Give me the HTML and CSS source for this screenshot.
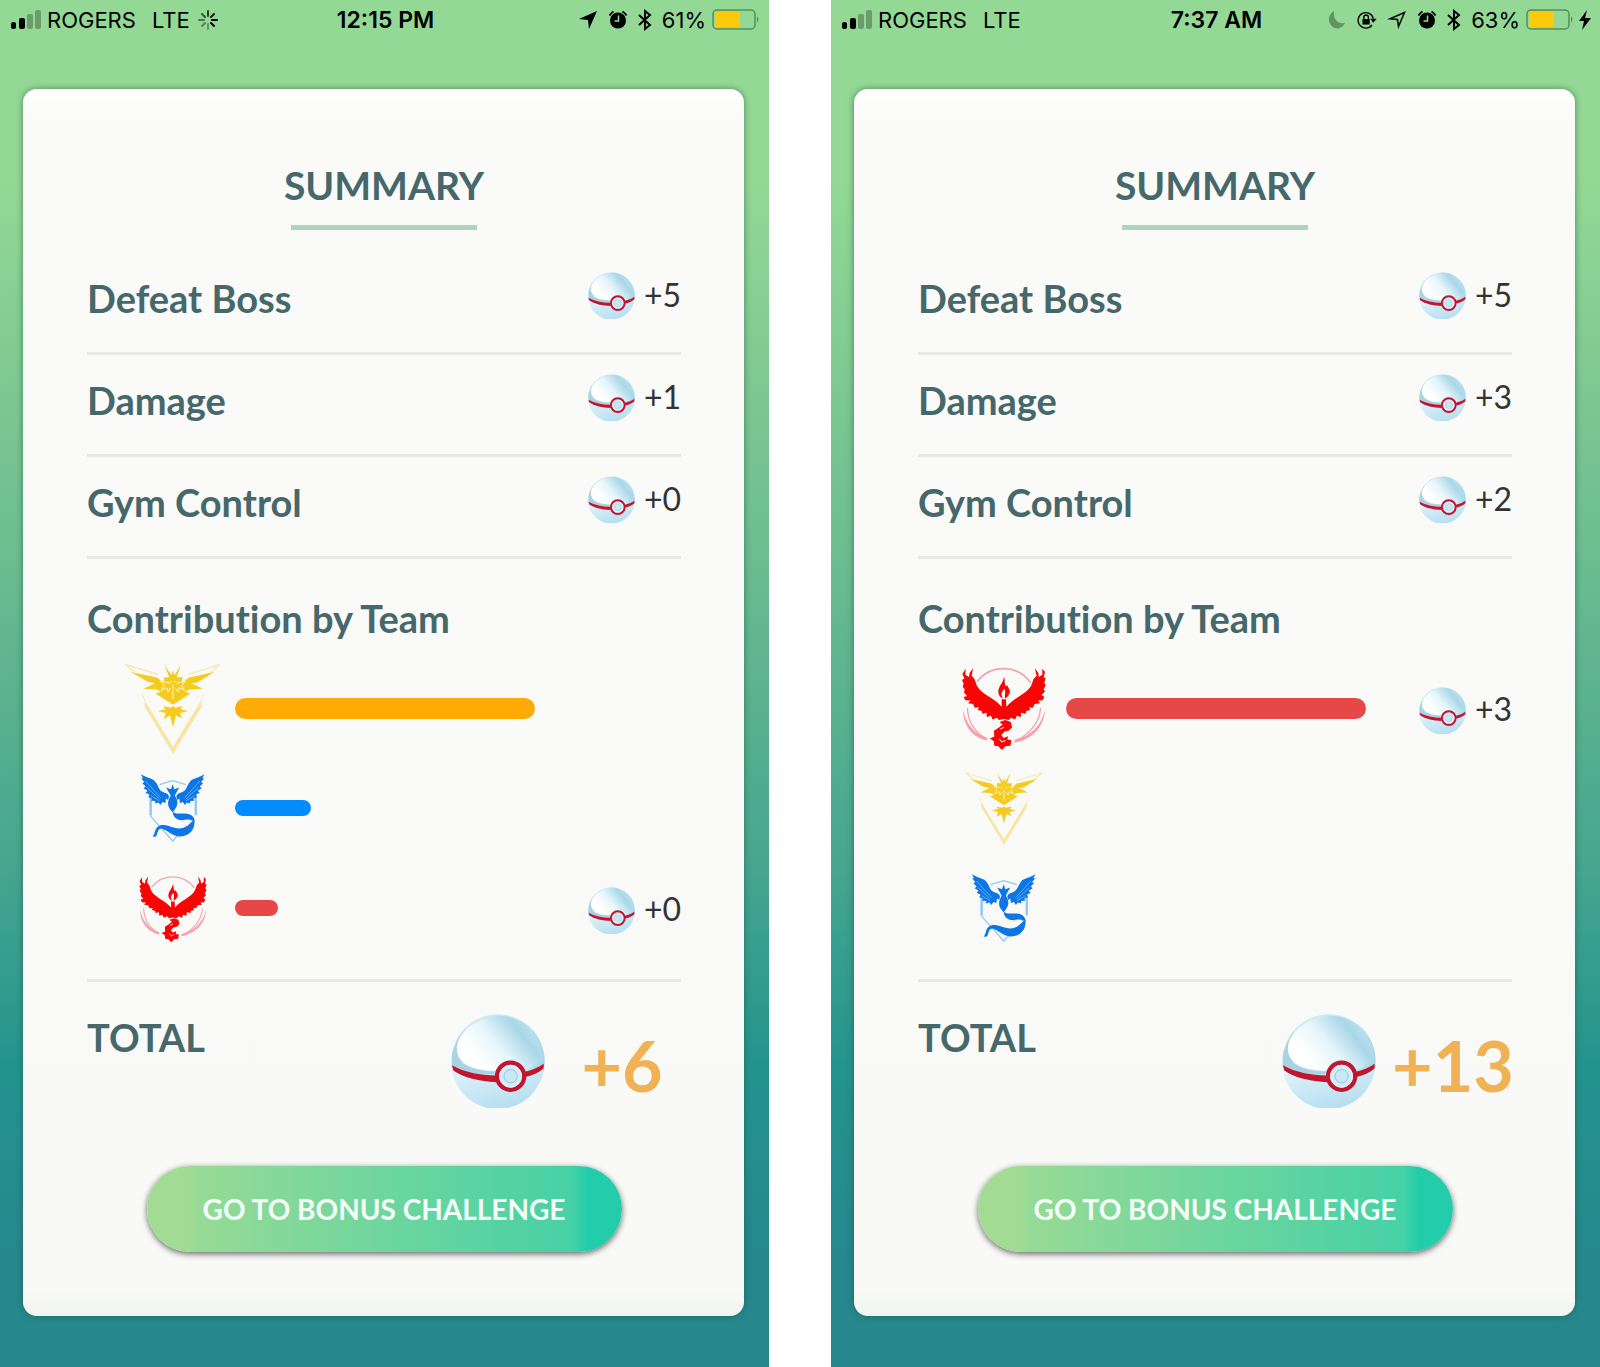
FILE: index.html
```html
<!DOCTYPE html>
<html lang="en">
<head>
<meta charset="utf-8">
<meta name="viewport" content="width=device-width, initial-scale=1">
<title>Raid Summary</title>
<link rel="stylesheet" href="styles.css">
</head>
<body>
<svg class="sprite" aria-hidden="true">
  <defs>
    <radialGradient id="ball-base" cx="0.4" cy="0.35" r="0.7">
      <stop offset="0" stop-color="#e8f7fc"/><stop offset="0.6" stop-color="#c3e6f3"/><stop offset="1" stop-color="#9acfe3"/>
    </radialGradient>
    <linearGradient id="ball-dome" x1="0.2" y1="0.7" x2="0.95" y2="0.3">
      <stop offset="0" stop-color="#ffffff"/><stop offset="0.4" stop-color="#e6f5fa"/><stop offset="0.8" stop-color="#a9d7e8"/><stop offset="1" stop-color="#b9e0ed"/>
    </linearGradient>
    <linearGradient id="ball-low" x1="0" y1="0" x2="0.6" y2="1">
      <stop offset="0" stop-color="#e4f5fb"/><stop offset="1" stop-color="#b5def0"/>
    </linearGradient>
  </defs>
  <symbol id="ball" viewBox="63 43 284 284">
    <circle cx="205" cy="185" r="141" fill="url(#ball-base)"/>
    <path d="M64 204C105 232 150 240 200 240L285 228C310 222 332 210 345 198A141 141 0 0 1 64 204Z" fill="url(#ball-low)"/>
    <path d="M66 170C70 150 80 120 100 96L96 190C120 208 160 216 196 216L194 226C145 226 95 218 66 199Z" fill="#a9d3e2"/>
    <path d="M82 160C72 110 130 55 205 48C285 48 335 110 330 180C318 198 303 208 287 212A46 46 0 0 0 200 214C145 214 92 202 82 160Z" fill="url(#ball-dome)"/>
    <path d="M66 198C105 220 150 228 200 229V249C150 247 100 236 70 214ZM283 218C308 212 329 204 343 193V207C330 219 308 230 285 234Z" fill="#c4152f"/>
    <circle cx="243" cy="231" r="41" fill="#d5ecf6" stroke="#c4152f" stroke-width="13"/>
    <circle cx="243" cy="231" r="33" fill="none" stroke="#e6f6fc" stroke-width="3"/>
    <circle cx="243" cy="231" r="20" fill="#c9e8f5" stroke="#91c8df" stroke-width="3"/>
  </symbol>

  <symbol id="instinct" viewBox="42 20 298 278">
    <g fill="none" stroke="#f8e8ae" stroke-width="4">
      <path d="M145 57L46 27L76 50M238 57L334 27L306 50"/>
      <path d="M97 116L112 150M285 116L270 150" stroke-width="3"/>
    </g>
    <path d="M104 142L112 148L191 276L269 148L277 142V157L191 297L106 157Z" fill="#f8e5a2"/>
    <path d="M64 50L142 67L164 82L164 66L180 66L165 29L187 60L191 45L195 60L215 29L202 66L220 66L218 82L240 67L316 50L265 82L246 84L282 101L240 103L228 110L244 115L191 149L138 115L154 110L142 103L102 101L136 84L115 80Z" fill="#f5cb1e"/>
    <path d="M153 77L180 84L187 78M229 77L202 84L195 78M153 77L165 91L156 105L172 98L176 110L184 98M229 77L217 91L226 105L210 98L206 110L198 98M191 88V132" fill="none" stroke="#fdf4ca" stroke-width="3"/>
    <path d="M162 153L184 158L191 153L198 158L220 153L214 163L237 168L212 174L218 190L200 182L191 217L182 182L163 193L169 174L145 168L168 163Z" fill="#f5cb1e"/>
  </symbol>

  <symbol id="mystic" viewBox="33 25 198 206">
    <g fill="none" stroke="#8fc8f6">
      <path d="M91 57L131 45L171 57M65 88V154L131 228L150 207" stroke-width="4"/>
      <path d="M64 90V150M201 88V150" stroke-width="7"/>
    </g>
    <g fill="#0d76e6">
      <path d="M34 26C50 36 71 38 79 49C88 60 88 72 100 79C109 84 118 83 120 94L117 104L111 99L109 113L100 110L94 119L88 111L78 114L78 107L66 106L68 99L57 95L61 88L49 82L55 76L43 68L49 63L39 53L45 49L36 39L41 37Z"/>
      <path d="M228 26C212 36 191 38 183 49C174 60 174 72 162 79C153 84 144 83 142 94L145 104L151 99L153 113L162 110L168 119L174 111L184 114L184 107L196 106L194 99L205 95L201 88L213 82L207 76L219 68L213 63L223 53L217 49L226 39L221 37Z"/>
      <path d="M131 56L136 71L151 66L141 83L138 91C150 110 146 121 136 135L131 141L125 134C113 121 116 106 125 91L121 83L111 66L126 71Z"/>
      <path d="M131 138C138 149 153 143 171 145C190 147 201 159 197 175C195 201 174 215 151 214C129 213 116 196 98 190C86 189 86 203 81 214L70 215C78 206 76 194 84 186C98 173 119 182 137 188C163 195 179 182 191 167C177 158 160 170 144 161C134 156 131 147 131 138Z"/>
    </g>
    <path d="M48 46L94 96M53 66L91 101M65 91L90 106M214 46L168 96M209 66L171 101M197 91L172 106M157 169C173 159 182 162 194 169" fill="none" stroke="#8fc8f6" stroke-width="2"/>
  </symbol>

  <symbol id="valor" viewBox="39 26 250 248">
    <g fill="none" stroke="#f2a3ae">
      <path d="M84 72A99 99 0 0 1 243 74" stroke-width="5"/>
      <path d="M55 150C57 190 76 222 112 242M273 150C271 190 242 229 196 249" stroke-width="4"/>
    </g>
    <path d="M42 155C52 200 78 228 113 238V247C72 238 42 204 42 155ZM286 155C276 202 240 236 196 244V253C246 244 284 208 286 155Z" fill="#f2a3ae"/>
    <g fill="#fa0505">
      <path d="M50 33L49 51L60 58L62 45L72 32L68 54L76 64L83 83C96 109 134 119 157 146L157 124L170 124L171 146C194 119 231 109 245 83L252 64L261 54L256 32L266 45L268 58L278 51L278 33L286 43L282 59L288 60L284 75L288 82L282 94L286 101L276 111L284 117L278 128L266 127L271 136L255 138L250 149L239 148L242 156L230 159L229 167L215 164L214 177L202 173L197 184L185 179L178 186L164 183L149 186L143 179L130 184L125 173L113 177L112 164L99 167L98 159L86 156L89 148L77 149L72 138L57 136L64 128L49 127L44 117L54 114L45 104L47 94L41 87L44 77L39 67L46 62L40 49Z"/>
      <path d="M164 57C163 74 146 86 147 103C148 114 155 119 161 122C153 107 158 101 165 93C171 102 165 109 167 122C177 115 187 104 178 91L174 82L170 86C164 77 168 67 164 57Z"/>
      <path d="M151 192L168 186L184 192L188 207L178 218L166 220L156 230L163 239L176 234L174 244L186 246L183 262L168 264L158 275L147 264L135 262L134 249L122 241L135 235L134 218L149 208L160 199Z"/>
    </g>
    <path d="M150 243L158 251L168 247M153 213L164 207" fill="none" stroke="#fafaf8" stroke-width="3"/>
  </symbol>

  <symbol id="signal" viewBox="0 0 31 20">
    <rect x="0" y="12" width="5" height="7" rx="2"/><rect x="8" y="8" width="6" height="11" rx="2"/>
    <rect x="16" y="4" width="6" height="15" rx="2" opacity=".27"/><rect x="24" y="0" width="6" height="19" rx="2" opacity=".27"/>
  </symbol>
  <symbol id="spinner" viewBox="0 0 20 20">
    <g stroke="#000" stroke-width="2" stroke-linecap="round">
      <path d="M10 1V6" opacity=".7"/><path d="M16 4L13 7" opacity=".85"/><path d="M14 10H19"/><path d="M13 13L16 16"/>
      <path d="M10 14V19" opacity=".3"/><path d="M4 16L7 13" opacity=".4"/><path d="M1 10H6" opacity=".45"/><path d="M4 4L7 7" opacity=".6"/>
    </g>
  </symbol>
  <symbol id="arrow-solid" viewBox="0 0 20 20"><path d="M19 1L11 19L10 10L1 9Z"/></symbol>
  <symbol id="arrow-line" viewBox="0 0 20 20"><path d="M17.500 2.500L11.500 16.500L10.500 9.500L3 8.700Z" fill="none" stroke="#000" stroke-width="1.500"/></symbol>
  <symbol id="alarm" viewBox="0 0 20 20">
    <circle cx="10" cy="10.500" r="8"/><path d="M1.500 5.500A12 12 0 0 1 5.500 1.500M14.500 1.500A12 12 0 0 1 18.500 5.500" fill="none" stroke="#000" stroke-width="2"/>
    <path d="M10.500 5.500V11H6.500" fill="none" stroke="#93d895" stroke-width="1.500"/>
  </symbol>
  <symbol id="bluetooth" viewBox="0 0 14 22"><path d="M1 6L12 16L7 20V2L12 6L1 16" fill="none" stroke="#000" stroke-width="2"/></symbol>
  <symbol id="moon" viewBox="0 0 18 20"><path d="M6 1C5 9 9 14 17 13C15 18 9 20 5 17C-1 13 0 4 6 1Z" fill="#629463"/></symbol>
  <symbol id="lock" viewBox="0 0 22 20">
    <path d="M16.500 15.500A8.500 8.500 0 1 1 18 8.500" fill="none" stroke="#000" stroke-width="1.500"/><path d="M14.500 8.500H21.500L18 13Z"/>
    <rect x="6" y="9" width="8" height="6"/><path d="M7.500 10V7A2.500 2.500 0 0 1 12.500 7V10" fill="none" stroke="#000" stroke-width="1.500"/>
  </symbol>
  <symbol id="battery" viewBox="0 0 48 21">
    <rect x="1" y="1" width="42" height="19" rx="4" fill="none" stroke="#568f5a" stroke-width="1.500"/>
    <rect x="3" y="3" width="25" height="15" rx="1" fill="#fec90a"/><path d="M45 7Q48 10 45 14Z" fill="#568f5a"/>
  </symbol>
  <symbol id="bolt" viewBox="0 0 12 20"><path d="M8 0L0 11H5L3 20L12 8H6Z"/></symbol>
</svg>

<main class="comparison">
  <section class="phone">
    <header class="status">
      <div class="status-left">
        <svg class="signal"><use href="#signal"/></svg><span>ROGERS</span><span class="network">LTE</span>
        <svg class="icon spinner"><use href="#spinner"/></svg>
      </div>
      <time class="clock">12:15 PM</time>
      <div class="status-right">
        <svg class="icon"><use href="#arrow-solid"/></svg>
        <svg class="icon"><use href="#alarm"/></svg>
        <svg class="bluetooth"><use href="#bluetooth"/></svg>
        <span>61%</span>
        <svg class="battery"><use href="#battery"/></svg>
      </div>
    </header>
    <article class="card">
      <h1 class="title">SUMMARY</h1>
      <dl class="scores">
        <div class="score"><dt>Defeat Boss</dt><dd class="reward"><svg class="ball"><use href="#ball"/></svg><span>+5</span></dd></div>
        <div class="score"><dt>Damage</dt><dd class="reward"><svg class="ball"><use href="#ball"/></svg><span>+1</span></dd></div>
        <div class="score"><dt>Gym Control</dt><dd class="reward"><svg class="ball"><use href="#ball"/></svg><span>+0</span></dd></div>
      </dl>
      <h2 class="subtitle">Contribution by Team</h2>
      <ul class="teams">
        <li class="team"><svg class="emblem instinct lead" role="img" aria-label="Instinct"><use href="#instinct"/></svg><div class="track"><div class="bar instinct-bar lead-bar" style="width:100%"></div></div></li>
        <li class="team"><svg class="emblem mystic" role="img" aria-label="Mystic"><use href="#mystic"/></svg><div class="track"><div class="bar mystic-bar" style="width:25.4%"></div></div></li>
        <li class="team"><svg class="emblem valor" role="img" aria-label="Valor"><use href="#valor"/></svg><div class="track"><div class="bar valor-bar" style="width:14.4%"></div></div><div class="reward"><svg class="ball"><use href="#ball"/></svg><span>+0</span></div></li>
      </ul>
      <div class="total">
        <h2 class="total-label">TOTAL</h2>
        <svg class="total-ball"><use href="#ball"/></svg>
        <strong class="total-value">+6</strong>
      </div>
      <button class="bonus" type="button">GO TO BONUS CHALLENGE</button>
    </article>
  </section>

  <section class="phone">
    <header class="status">
      <div class="status-left">
        <svg class="signal"><use href="#signal"/></svg><span>ROGERS</span><span class="network">LTE</span>
      </div>
      <time class="clock">7:37 AM</time>
      <div class="status-right">
        <svg class="icon"><use href="#moon"/></svg>
        <svg class="icon"><use href="#lock"/></svg>
        <svg class="icon"><use href="#arrow-line"/></svg>
        <svg class="icon"><use href="#alarm"/></svg>
        <svg class="bluetooth"><use href="#bluetooth"/></svg>
        <span>63%</span>
        <svg class="battery"><use href="#battery"/></svg>
        <svg class="bolt"><use href="#bolt"/></svg>
      </div>
    </header>
    <article class="card">
      <h1 class="title">SUMMARY</h1>
      <dl class="scores">
        <div class="score"><dt>Defeat Boss</dt><dd class="reward"><svg class="ball"><use href="#ball"/></svg><span>+5</span></dd></div>
        <div class="score"><dt>Damage</dt><dd class="reward"><svg class="ball"><use href="#ball"/></svg><span>+3</span></dd></div>
        <div class="score"><dt>Gym Control</dt><dd class="reward"><svg class="ball"><use href="#ball"/></svg><span>+2</span></dd></div>
      </dl>
      <h2 class="subtitle">Contribution by Team</h2>
      <ul class="teams">
        <li class="team"><svg class="emblem valor lead" role="img" aria-label="Valor"><use href="#valor"/></svg><div class="track"><div class="bar valor-bar lead-bar" style="width:100%"></div></div><div class="reward"><svg class="ball"><use href="#ball"/></svg><span>+3</span></div></li>
        <li class="team"><svg class="emblem instinct" role="img" aria-label="Instinct"><use href="#instinct"/></svg></li>
        <li class="team"><svg class="emblem mystic" role="img" aria-label="Mystic"><use href="#mystic"/></svg></li>
      </ul>
      <div class="total">
        <h2 class="total-label">TOTAL</h2>
        <svg class="total-ball"><use href="#ball"/></svg>
        <strong class="total-value">+13</strong>
      </div>
      <button class="bonus" type="button">GO TO BONUS CHALLENGE</button>
    </article>
  </section>
</main>
</body>
</html>
```
FILE: styles.css
```css
* { box-sizing: border-box; }
body, h1, h2, dl, dd, ul { margin: 0; padding: 0; }
ul { list-style: none; }
svg { display: block; flex: none; }

body {
  background: #fff;
  font-family: Lato, "Open Sans", sans-serif;
  font-variant-ligatures: none;
  color: #46686a;
}

.sprite { position: absolute; width: 0; height: 0; }

.comparison { display: flex; gap: 62px; min-height: 100vh; }

.phone {
  flex: 1;
  display: flex;
  flex-direction: column;
  padding: 0 25px 51px 23px;
  background: linear-gradient(#93d895 0%, #93d895 13%, #6dbd90 40%, #45a58f 64%, #23948d 78%, #26888d 92%, #26888d 100%);
}

/* Status bar */
.status {
  display: grid;
  grid-template-columns: 1fr auto 1fr;
  align-items: center;
  height: 39px;
  margin: 0 -16px 50px -12px;
  font: 400 22px/28px Inter, "Liberation Sans", sans-serif;
  color: #000;
}
.status-left, .status-right { display: flex; align-items: center; }
.status-right { justify-content: flex-end; gap: 10px; }
.signal { width: 31px; height: 20px; margin-right: 5px; }
.network { margin-left: 16px; }
.spinner { margin-left: 8px; }
.clock { font-size: 23px; font-weight: 600; }
.icon { width: 20px; height: 20px; }
.bluetooth { width: 14px; height: 22px; }
.battery { width: 48px; height: 21px; margin-left: -4px; }
.bolt { width: 12px; height: 20px; margin-left: -5px; }

/* Summary card */
.card {
  flex: 1;
  display: flex;
  flex-direction: column;
  padding: 72px 63px 64px 64px;
  border-radius: 14px;
  background: linear-gradient(#fff 0, #fafaf8 28px, #f9faf8 calc(100% - 28px), #f1f4ef 100%);
  box-shadow: 0 0 6px rgba(30, 80, 60, .6);
}

.title {
  align-self: center;
  width: 186px;
  padding-bottom: 16px;
  border-bottom: 5px solid #aed3bf;
  display: flex;
  justify-content: center;
  font-size: 39px;
  line-height: 48px;
  font-weight: 700;
}

.scores { margin-top: 23px; }
.score {
  display: flex;
  align-items: center;
  justify-content: space-between;
  height: 102px;
  padding-bottom: 14px;
  border-bottom: 3px solid #e7e8e7;
}
.score dt, .subtitle, .total-label {
  font-size: 38px;
  line-height: 46px;
  font-weight: 700;
}
.score dt { padding-top: 4px; }

.reward {
  display: flex;
  align-items: center;
  justify-content: space-between;
  width: 93px;
  font-size: 32px;
  line-height: 40px;
  color: #333;
}
.reward span { padding-bottom: 2px; }
.ball { width: 47px; height: 47px; }

.subtitle { margin-top: 36px; }

/* Team contributions */
.teams {
  margin-top: 17px;
  padding-bottom: 21px;
  border-bottom: 3px solid #e7e8e7;
}
.team {
  display: grid;
  grid-template-columns: 100px 1fr 93px;
  align-items: center;
  height: 100px;
  padding-left: 36px;
}
.team .reward { padding-top: 4px; }
.emblem { justify-self: center; }
.instinct { width: 80px; height: 74px; }
.instinct.lead { width: 100px; height: 92px; }
.mystic { width: 66px; height: 68px; }
.valor { width: 68px; height: 67px; }
.valor.lead { width: 84px; height: 84px; }
.track { margin: 0 53px 0 12px; }
.bar { height: 16px; border-radius: 16px; }
.lead-bar { height: 21px; }
.instinct-bar { background: #ffaa05; }
.mystic-bar { background: #048cff; }
.valor-bar { background: #e64848; }

/* Total */
.total {
  display: flex;
  align-items: flex-start;
  margin-top: 32px;
}
.total-label { flex: 1; }
.total-ball { width: 94px; height: 94px; }
.total-value {
  width: 118px;
  margin-left: 18px;
  font-size: 70px;
  line-height: 102px;
  font-weight: 700;
  color: #f0b254;
  display: flex;
  justify-content: center;
}

.bonus {
  align-self: center;
  width: 475px;
  height: 86px;
  margin-top: auto;
  border: 0;
  border-radius: 43px;
  background: linear-gradient(90deg, #a2db94 0, #a2db94 42px, #97da96 50px, #46d1a6 425px, #23cdab 440px);
  box-shadow: 0 2px 6px rgba(0, 0, 0, .6);
  color: #f4fff8;
  font: 700 28px/34px Lato, "Open Sans", sans-serif;
}
```
